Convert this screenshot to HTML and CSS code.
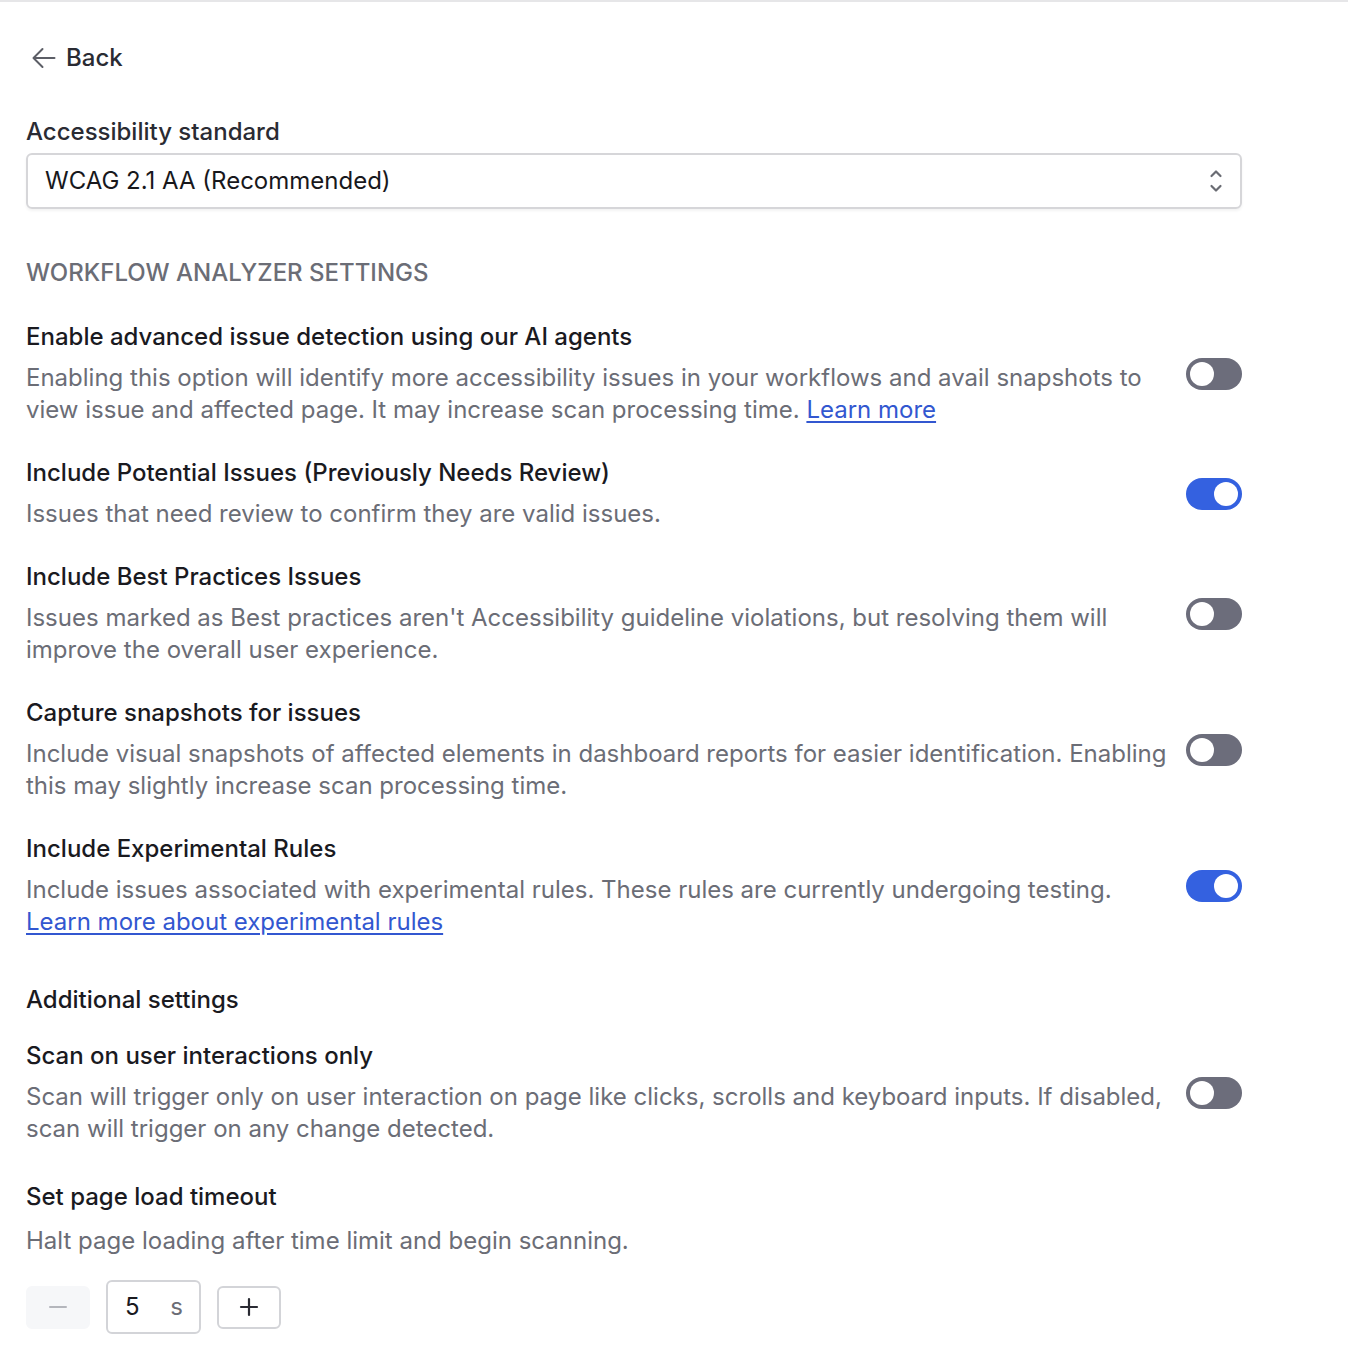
FILE: index.html
```html
<!DOCTYPE html>
<html lang="en">
<head>
<meta charset="utf-8">
<title>Settings</title>
<link rel="stylesheet" href="styles.css">
</head>
<body>
<div class="topline"></div>
<main class="panel">
  <a class="back" href="#">
    <svg class="back-icon" width="24" height="24" viewBox="0 0 24 24" fill="none" stroke="currentColor" stroke-width="2" stroke-linecap="round" stroke-linejoin="round"><path d="M22.5 12H2"/><path d="M10.5 3L1.5 12L10.5 21"/></svg>
    <span>Back</span>
  </a>

  <div class="field">
    <label class="field-label">Accessibility standard</label>
    <div class="select">
      <span>WCAG 2.1 AA (Recommended)</span>
      <svg class="chev" width="14" height="26" viewBox="0 0 14 26" fill="none" stroke="currentColor" stroke-width="2.2" stroke-linecap="round" stroke-linejoin="round"><path d="M2.5 8L7 3.5L11.5 8"/><path d="M2.5 18L7 22.5L11.5 18"/></svg>
    </div>
  </div>

  <h2 class="section-heading">WORKFLOW ANALYZER SETTINGS</h2>

  <div class="settings">
    <div class="setting">
      <div class="setting-text">
        <div class="setting-title">Enable advanced issue detection using our AI agents</div>
        <p class="setting-desc">Enabling this option will identify more accessibility issues in your workflows and avail snapshots to view issue and affected page. It may increase scan processing time. <a href="#">Learn more</a></p>
      </div>
      <span class="toggle"></span>
    </div>
    <div class="setting">
      <div class="setting-text">
        <div class="setting-title">Include Potential Issues (Previously Needs Review)</div>
        <p class="setting-desc">Issues that need review to confirm they are valid issues.</p>
      </div>
      <span class="toggle on"></span>
    </div>
    <div class="setting">
      <div class="setting-text">
        <div class="setting-title">Include Best Practices Issues</div>
        <p class="setting-desc">Issues marked as Best practices aren't Accessibility guideline violations, but resolving them will improve the overall user experience.</p>
      </div>
      <span class="toggle"></span>
    </div>
    <div class="setting">
      <div class="setting-text">
        <div class="setting-title">Capture snapshots for issues</div>
        <p class="setting-desc">Include visual snapshots of affected elements in dashboard reports for easier identification. Enabling this may slightly increase scan processing time.</p>
      </div>
      <span class="toggle"></span>
    </div>
    <div class="setting">
      <div class="setting-text">
        <div class="setting-title">Include Experimental Rules</div>
        <p class="setting-desc">Include issues associated with experimental rules. These rules are currently undergoing testing. <br><a href="#">Learn more about experimental rules</a></p>
      </div>
      <span class="toggle on"></span>
    </div>
  </div>

  <h3 class="sub-heading">Additional settings</h3>

  <div class="settings">
    <div class="setting">
      <div class="setting-text">
        <div class="setting-title">Scan on user interactions only</div>
        <p class="setting-desc">Scan will trigger only on user interaction on page like clicks, scrolls and keyboard inputs. If disabled, scan will trigger on any change detected.</p>
      </div>
      <span class="toggle"></span>
    </div>
  </div>

  <div class="timeout">
    <div class="setting-title">Set page load timeout</div>
    <p class="setting-desc timeout-desc">Halt page loading after time limit and begin scanning.</p>
    <div class="stepper">
      <button class="step-btn minus" disabled>
        <svg width="20" height="20" viewBox="0 0 20 20" fill="none" stroke="currentColor" stroke-width="2" stroke-linecap="round"><path d="M2 10H18"/></svg>
      </button>
      <div class="step-input"><span class="val">5</span><span class="unit">s</span></div>
      <button class="step-btn plus">
        <svg width="20" height="20" viewBox="0 0 20 20" fill="none" stroke="currentColor" stroke-width="2.2" stroke-linecap="round"><path d="M2 10H18"/><path d="M10 2V18"/></svg>
      </button>
    </div>
  </div>
</main>
</body>
</html>
```

FILE: styles.css
```css
* { box-sizing: border-box; }
html, body { margin: 0; padding: 0; background: #ffffff; }
body {
  font-family: Inter, "Noto Sans", "Liberation Sans", sans-serif;
  color: #1c1c21;
  font-size: 24px;
  line-height: 32px;
}
.topline { height: 2px; background: #e6e6e8; }

.panel {
  width: 1216px;
  margin-left: 26px;
  padding-top: 40px;
  padding-bottom: 26px;
}

.back {
  display: inline-flex;
  align-items: center;
  gap: 10px;
  color: #2a2b33;
  text-decoration: none;
  height: 32px;
  margin-left: 6px;
}
.back-icon { color: #5c5e66; }
.back span { font-weight: 500; }

.field { margin-top: 38px; }
.field-label { display: block; color: #2a2b33; font-weight: 500; line-height: 32px; }
.select {
  margin-top: 5px;
  height: 56px;
  border: 2px solid #d6d6d9;
  border-radius: 6px;
  display: flex;
  align-items: center;
  justify-content: space-between;
  padding: 0 17px 0 17px;
  box-shadow: 0 2px 3px rgba(0,0,0,0.05);
  color: #18181c;
}
.chev { color: #6a6c73; }

.section-heading {
  margin: 48px 0 0;
  font-size: 24px;
  font-weight: 500;
  line-height: 32px;
  color: #6b6d76;
  letter-spacing: 0;
}

.settings { display: flex; flex-direction: column; gap: 31px; margin-top: 32px; }
.setting {
  display: flex;
  align-items: center;
  gap: 14px;
}
.setting-text { flex: 1; }
.setting-title { font-weight: 500; color: #1a1a1f; line-height: 32px; }
.setting-desc { margin: 9px 0 0; color: #6b6d76; line-height: 32px; }
.setting-desc a { color: #3257d0; text-decoration: underline; text-underline-offset: 3px; }

.toggle {
  flex: none;
  width: 56px;
  height: 32px;
  border-radius: 16px;
  background: #6c6d7b;
  position: relative;
}
.toggle::after {
  content: "";
  position: absolute;
  top: 4px;
  left: 4px;
  width: 24px;
  height: 24px;
  border-radius: 50%;
  background: #ffffff;
}
.toggle.on { background: #3461e0; }
.toggle.on::after { left: 28px; }

.sub-heading {
  margin: 46px 0 0;
  font-size: 24px;
  font-weight: 500;
  line-height: 32px;
  color: #1a1a1f;
}
.sub-heading + .settings { margin-top: 24px; }

.timeout { margin-top: 36px; }
.timeout-desc { margin-top: 12px; }

.stepper {
  display: flex;
  align-items: center;
  margin-top: 23px;
  gap: 16px;
}
.step-btn {
  width: 64px;
  height: 43px;
  border-radius: 6px;
  border: 2px solid #d3d4d8;
  background: #ffffff;
  display: flex;
  align-items: center;
  justify-content: center;
  color: #2a2b33;
  padding: 0;
  font: inherit;
}
.step-btn.minus { background: #f6f7f9; border-color: #f6f7f9; color: #b4b6bc; }
.step-input {
  width: 95px;
  height: 54px;
  border: 2px solid #d3d4d8;
  border-radius: 6px;
  display: flex;
  align-items: center;
  padding: 0 16px 0 17px;
  justify-content: space-between;
}
.step-input .val { color: #1a1a1f; }
.step-input .unit { color: #6b6d76; }
```
